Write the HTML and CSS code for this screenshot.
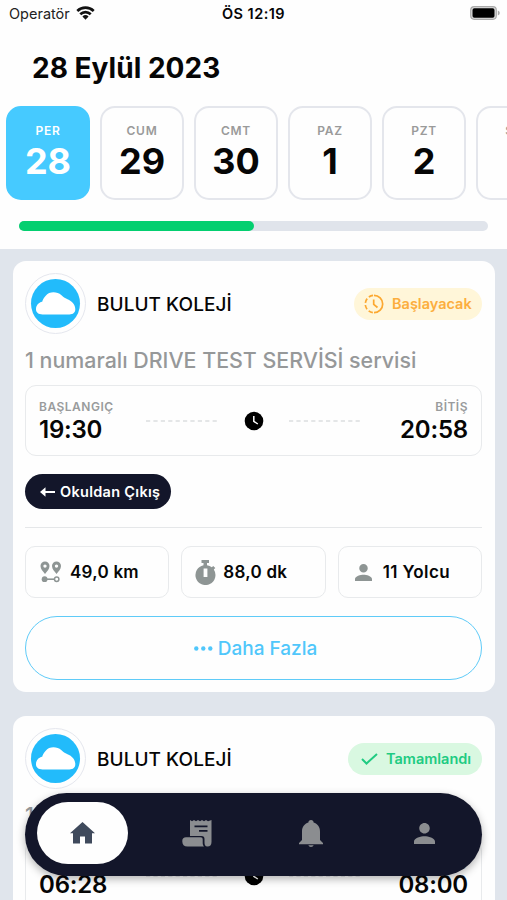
FILE: index.html
```html
<!DOCTYPE html>
<html lang="tr">
<head>
<meta charset="utf-8">
<title>Servisler</title>
<link rel="stylesheet" href="styles.css">
</head>
<body>
<svg class="defs" width="0" height="0">
  <symbol id="person" viewBox="4 4 16 16"><path d="M12 12c2.210 0 4-1.790 4-4s-1.790-4-4-4-4 1.790-4 4 1.790 4 4 4zm0 2c-2.670 0-8 1.340-8 4v2h16v-2c0-2.660-5.330-4-8-4z"/></symbol>
  <symbol id="cloud" viewBox="0 0 40 23"><path d="M6.500 22.500C2.500 22.500 0 20.500 0 17.300 0 13.500 2.500 10.500 6.200 9.800 6.500 8 7.700 5.800 9.500 3.900 11.500 1.200 14.500.2 17.500.2 20.500.2 23 1 25.500 3.200 27.500 5 28.500 6 31.500 7.200 36 9 39.300 12.500 39.300 17.300 39.300 20.500 37 22.500 33.500 22.500z"/></symbol>
  <symbol id="clock" viewBox="0 0 20 20"><circle cx="10" cy="10" r="9.300"/><path d="M9.800 5v5.300l4 2.700" fill="none" stroke="#fff" stroke-width="1.500"/></symbol>
</svg>
<div class="screen">
  <header class="header">
    <div class="status">
      <span class="carrier">Operatör</span>
      <svg class="wifi" viewBox="0 0 20 15" width="19" height="14"><g fill="none" stroke="#111" stroke-width="2.800"><path d="M1.200 5.300a12.600 12.600 0 0 1 17.600 0"/><path d="M4.400 8.900a8 8 0 0 1 11.200 0"/></g><path d="M6.700 11.300a4.800 4.800 0 0 1 6.600 0L10 14.800z" fill="#111"/></svg>
      <span class="clock">ÖS 12:19</span>
      <svg class="battery" viewBox="0 0 30 14" width="30" height="14"><rect x=".7" y=".7" width="25.600" height="12.600" rx="3.500" fill="#ddd" stroke="#aaa" stroke-width="1.200"/><rect x="2.500" y="2.300" width="22" height="9.400" rx="1.800"/><path d="M27.800 4.500q2 .8 2 2.500t-2 2.500z" fill="#aaa"/></svg>
    </div>
    <h1 class="date">28 Eylül 2023</h1>
    <div class="days">
      <div class="day active"><span class="dow">PER</span><span class="num">28</span></div>
      <div class="day"><span class="dow">CUM</span><span class="num">29</span></div>
      <div class="day"><span class="dow">CMT</span><span class="num">30</span></div>
      <div class="day"><span class="dow">PAZ</span><span class="num">1</span></div>
      <div class="day"><span class="dow">PZT</span><span class="num">2</span></div>
      <div class="day"><span class="dow">SAL</span><span class="num">3</span></div>
    </div>
    <div class="progress"><div class="bar"></div></div>
  </header>
  <main class="list">
    <section class="card">
      <div class="top">
        <div class="avatar"><div class="disc"><svg width="40" height="23"><use href="#cloud"/></svg></div></div>
        <h2 class="school">BULUT KOLEJİ</h2>
        <div class="badge soon">
          <svg viewBox="0 0 20 20" width="20" height="20" fill="none" stroke="#fca830" stroke-width="1.700"><path d="M10 1.300a8.700 8.700 0 0 1 0 17.400"/><path d="M10 18.700a8.700 8.700 0 0 1 0-17.400" stroke-dasharray="4.500 2.330" stroke-dashoffset="-1.200"/><path d="M9.700 5.500v4.800l3.800 3.200"/></svg>
          <span>Başlayacak</span>
        </div>
      </div>
      <p class="service">1 numaralı DRIVE TEST SERVİSİ servisi</p>
      <div class="times">
        <div class="time"><span class="label">BAŞLANGIÇ</span><span class="value">19:30</span></div>
        <svg class="dash" width="72" height="2"><path d="M0 1h72"/></svg>
        <svg class="dot" width="20" height="20"><use href="#clock"/></svg>
        <svg class="dash" width="72" height="2"><path d="M0 1h72"/></svg>
        <div class="time end"><span class="label">BİTİŞ</span><span class="value">20:58</span></div>
      </div>
      <div class="direction"><svg viewBox="0 0 15 10" width="15" height="10"><path d="M15 5H3" stroke="#fff" stroke-width="2"/><path d="M0 5 5.500.3v9.400z" fill="#fff"/></svg><span>Okuldan Çıkış</span></div>
      <div class="stats">
        <div class="stat">
          <svg viewBox="0 0 22 22" width="22" height="22"><path fill-rule="evenodd" d="M5 .5A4.500 4.500 0 0 0 .5 5C.5 8 3 10.500 5 13c2-2.500 4.500-5 4.500-8A4.500 4.500 0 0 0 5 .5zm0 2.900a1.700 1.700 0 1 1 0 3.400 1.700 1.700 0 0 1 0-3.400zM16.500.5A4.500 4.500 0 0 0 12 5c0 3 2.500 5.500 4.500 8C18.500 10.500 21 8 21 5A4.500 4.500 0 0 0 16.500.5zm0 2.900a1.700 1.700 0 1 1 0 3.400 1.700 1.700 0 0 1 0-3.400z"/><circle cx="4.600" cy="18.200" r="2.900"/><path d="M6 18.200h8" stroke="#8e9594" stroke-width="1.600"/><circle cx="16.700" cy="18.200" r="2.200" fill="#fff" stroke="#8e9594" stroke-width="1.500"/></svg>
          <span>49,0 km</span></div>
        <div class="stat watch">
          <svg viewBox="0 0 21 25" width="21" height="25"><path fill-rule="evenodd" d="M6.500 0h7.500v3h-2v2.200c1.900.3 3.500 1 4.800 2l1.400-1.300 2.100 2-1.500 1.600A10 10 0 1 1 8.500 5.200V3h-2zM8.600 8.500v8.500h3.800V8.500z"/></svg>
          <span>88,0 dk</span></div>
        <div class="stat people">
          <svg width="17" height="17"><use href="#person"/></svg>
          <span>11 Yolcu</span></div>
      </div>
      <div class="more"><svg viewBox="0 0 19 5" width="19" height="5"><circle cx="2.300" cy="2.500" r="2.200"/><circle cx="9.300" cy="2.500" r="2.200"/><circle cx="16.300" cy="2.500" r="2.200"/></svg><span>Daha Fazla</span></div>
    </section>
    <section class="card">
      <div class="top">
        <div class="avatar"><div class="disc"><svg width="40" height="23"><use href="#cloud"/></svg></div></div>
        <h2 class="school">BULUT KOLEJİ</h2>
        <div class="badge done">
          <svg viewBox="0 0 17 12" width="17" height="12" fill="none" stroke="#20cb82" stroke-width="2"><path d="M1 6l4.500 4.500L16 1"/></svg>
          <span>Tamamlandı</span>
        </div>
      </div>
      <p class="service">1 numaralı DRIVE TEST SERVİSİ servisi</p>
      <div class="times">
        <div class="time"><span class="label">BAŞLANGIÇ</span><span class="value">06:28</span></div>
        <svg class="dash" width="72" height="2"><path d="M0 1h72"/></svg>
        <svg class="dot" width="20" height="20"><use href="#clock"/></svg>
        <svg class="dash" width="72" height="2"><path d="M0 1h72"/></svg>
        <div class="time end"><span class="label">BİTİŞ</span><span class="value">08:00</span></div>
      </div>
    </section>
  </main>
  <nav class="nav">
    <div class="tab current"><svg viewBox="0 0 25 22" width="25" height="22"><path d="M12.500 0 0 11.300h3V21.500h7v-7h5v7h7V11.300h3z" fill="#3f4a5c"/></svg></div>
    <div class="tab"><svg viewBox="0 0 30 28" width="30" height="28"><path fill-rule="evenodd" d="M8 1l2 1.300L12 1l2 1.300L16 1l2 1.300L20 1l2 1.300L24 1l2 1.300L29.500 1v22c0 3-1.500 4.500-4 4.500s-3-2-3-4V20c0-2-1-3-3-3H8zM12.500 6.500v1.800h13V6.500zM17 11v1.800h8.500V11z"/><path d="M4 18.300h14.500c1.500 0 2.200.7 2.200 2.200v3.500c0 1.500.5 2.700 1.300 3.500H5.500C2 27.500.3 25.500.3 22.500v-.7c0-2.300 1.400-3.500 3.700-3.500z"/></svg></div>
    <div class="tab"><svg viewBox="0 0 24 27" width="24" height="27"><path d="M12 0c1.600 0 2.600 1 2.600 2.500C18.500 3.700 21 7 21 11.500V20l3 3v1.200H0V23l3-3v-8.500C3 7 5.500 3.700 9.400 2.500 9.400 1 10.400 0 12 0zM9.300 25.200h5.400Q14 27 12 27t-2.700-1.800z"/></svg></div>
    <div class="tab"><svg width="21" height="21"><use href="#person"/></svg></div>
  </nav>
</div>
</body>
</html>
```

FILE: styles.css
```css
* { box-sizing: border-box; }
body { margin: 0; font-family: Inter, "Liberation Sans", sans-serif; color: #060606; }
h1, h2, p { margin: 0; }
svg { display: block; flex: none; }
span { white-space: nowrap; }
.defs { position: absolute; }
.screen { position: relative; width: 507px; height: 900px; overflow: hidden; background: #e0e5ec; }

.header { height: 249px; background: #fefefe; overflow: hidden; }
.status { height: 27px; display: grid; grid-template-columns: 76px 146px 1fr 37px; align-items: center; font-size: 14.5px; }
.carrier { padding-left: 9px; letter-spacing: 0; color: #222; }
.wifi { margin-top: -2px; }
.clock { font-weight: 600; font-size: 14.5px; letter-spacing: .45px; }
.battery { margin-top: -1px; }
.date { margin: 22px 0 0 32px; height: 38px; line-height: 38px; font-size: 28px; font-weight: 700; letter-spacing: .03px; white-space: nowrap; }
.days { margin: 19px 0 0 6px; display: flex; gap: 10px; }
.day { flex: none; width: 84px; height: 94px; border: 2px solid #e4e6ec; border-radius: 15px; display: flex; flex-direction: column; align-items: center; padding-top: 15px; }
.dow { height: 16px; line-height: 16px; font-size: 12px; font-weight: 600; letter-spacing: .7px; color: #9a9a9a; }
.num { height: 44px; line-height: 44px; font-size: 36px; font-weight: 700; }
.active { background: #46caff; border-color: #46caff; color: #fff; }
.active .dow { color: #fff; }
.progress { margin: 21px 19px 0; height: 10px; border-radius: 5px; background: #e0e4eb; }
.bar { width: 235px; height: 10px; border-radius: 5px; background: #04cf70; }

.list { padding: 12px 12px 0 13px; display: flex; flex-direction: column; gap: 24px; }
.card { flex: none; height: 431px; padding: 12px 13px 0 12px; background: #fefefe; border-radius: 13px; }
.top { height: 61px; display: flex; align-items: center; }
.avatar { width: 61px; height: 61px; border: 1.500px solid #e5e7ee; border-radius: 50%; display: grid; place-items: center; }
.disc { width: 49px; height: 49px; border-radius: 50%; background: #22bbfb; display: grid; place-items: center; fill: #fff; }
.school { margin: 2px 0 0 11px; font-size: 19px; font-weight: 500; letter-spacing: .05px; white-space: nowrap; }
.badge { margin-left: auto; height: 32px; border-radius: 16px; display: flex; align-items: center; font-size: 14.5px; font-weight: 600; }
.soon { width: 128px; padding-left: 10px; gap: 8px; background: #fff6d9; color: #fcae3e; }
.done { width: 134px; padding-left: 13px; gap: 8px; background: #d9f8e1; color: #20cb82; }
.service { margin-top: 10px; height: 33px; line-height: 33px; font-size: 21.4px; font-weight: 500; letter-spacing: 0; color: #969899; white-space: nowrap; }
.times { margin-top: 8px; height: 71px; border: 1.500px solid #e8eaec; border-radius: 11px; padding: 0 13px; display: flex; align-items: center; justify-content: space-between; }
.time { width: 82px; padding-top: 1px; display: flex; flex-direction: column; }
.end { align-items: flex-end; }
.label { height: 16px; line-height: 16px; font-size: 12px; font-weight: 600; letter-spacing: .5px; color: #999b9c; }
.value { height: 29px; line-height: 29px; font-size: 24px; font-weight: 600; letter-spacing: -.2px; }
.dash { stroke: #dcdee0; stroke-width: 1.500; stroke-dasharray: 4.200 3.200; }
.direction { margin-top: 18px; width: 146px; height: 35px; border-radius: 18px; padding-left: 15px; background: #13162a; color: #fff; display: flex; align-items: center; gap: 5px; font-size: 14.5px; font-weight: 600; letter-spacing: .3px; }
.stats { margin-top: 18px; border-top: 1.500px solid #e5e7e9; padding-top: 18px; display: grid; grid-template-columns: repeat(3, 1fr); gap: 12px; }
.stat { height: 52px; border: 1.500px solid #e8eaec; border-radius: 10px; padding-left: 14px; display: flex; align-items: center; gap: 8px; font-size: 17px; font-weight: 600; letter-spacing: .25px; fill: #8e9594; }
.watch { padding-left: 13px; gap: 7px; }
.people { padding-left: 16px; gap: 11px; letter-spacing: .4px; }
.more { margin-top: 18px; height: 64px; padding-left: 4px; border: 1.500px solid #5fcbf8; border-radius: 32px; display: flex; align-items: center; justify-content: center; gap: 5px; color: #50c7fb; fill: #50c7fb; font-size: 19px; font-weight: 500; }

.nav { position: absolute; left: 25px; top: 793px; width: 457px; height: 83px; padding: 0 12px; border-radius: 42px; background: #13162a; box-shadow: 0 3px 8px rgba(0, 0, 0, .3); display: grid; grid-template-columns: 91px 137px 91px 137px; align-items: center; fill: #8b8d90; }
.tab { height: 62px; margin-top: -3px; display: grid; place-items: center; }
.current { background: #fefefe; border-radius: 31px; }
```
